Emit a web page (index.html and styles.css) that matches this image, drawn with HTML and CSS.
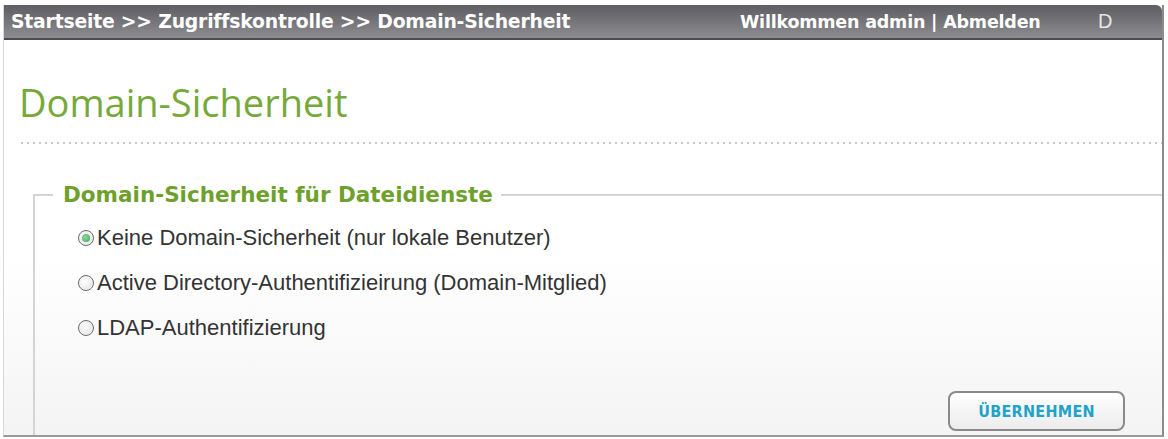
FILE: index.html
```html
<!DOCTYPE html>
<html lang="de">
<head>
    <meta charset="utf-8">
    <title>Domain-Sicherheit</title>
    <link rel="stylesheet" href="styles.css">
</head>
<body>
    <div class="frame">
        <div class="topbar">
            <div class="crumbs">Startseite &gt;&gt; Zugriffskontrolle &gt;&gt; Domain-Sicherheit</div>
            <div class="user">Willkommen admin | Abmelden</div>
            <div class="lang">D</div>
        </div>
        <div class="content">
            <h1 class="title">Domain-Sicherheit</h1>
            <div class="dots"></div>
            <fieldset class="group">
                <legend>Domain-Sicherheit für Dateidienste</legend>
                <label class="opt"><span class="radio checked"></span>Keine Domain-Sicherheit (nur lokale Benutzer)</label>
                <label class="opt"><span class="radio"></span>Active Directory-Authentifizieirung (Domain-Mitglied)</label>
                <label class="opt"><span class="radio"></span>LDAP-Authentifizierung</label>
                <div class="actions">
                    <button class="apply">ÜBERNEHMEN</button>
                </div>
            </fieldset>
        </div>
    </div>
</body>
</html>
```

FILE: styles.css
```css
html, body {
    margin: 0;
    padding: 0;
    background: #fff;
    overflow: hidden;
}

.frame {
    margin: 5px 4px 0 3px;
    height: 432px;
    border-right: 2px solid #8c8c8c;
    border-bottom: 2px solid #9a9a9a;
    border-left: 1px solid #d8d8d8;
    display: flex;
    flex-direction: column;
    box-sizing: border-box;
}

.topbar {
    height: 35px;
    display: flex;
    align-items: center;
    background: linear-gradient(#5e5e62, #727277 45%, #8c8c91);
    border-bottom: 2px solid #4c4c50;
    border-top-right-radius: 6px;
    color: #fff;
    font-family: "DejaVu Sans", sans-serif;
    font-weight: 700;
    font-size: 17.5px;
    white-space: nowrap;
    box-sizing: border-box;
}

.crumbs {
    padding-left: 7px;
    width: 729px;
    font-size: 18.8px;
    letter-spacing: -0.2px;
}

.user {
    width: 358px;
    letter-spacing: -0.2px;
}

.lang {
    font-family: "Liberation Sans", sans-serif;
    font-weight: 400;
    color: #e6e6e6;
    font-size: 20px;
}

.content {
    flex: 1;
    padding: 0 0 0 15px;
    background: linear-gradient(#fff 55%, #f4f4f4);
    display: flex;
    flex-direction: column;
}

.title {
    margin: 40px 0 0 0;
    font-family: "Open Sans", sans-serif;
    font-weight: 400;
    font-size: 38px;
    line-height: 44px;
    color: #76a83a;
}

.dots {
    margin-top: 18px;
    height: 2px;
    background-image: radial-gradient(circle, #c8c8c8 0.8px, transparent 1.2px);
    background-size: 6px 2px;
}

.group {
    margin: 38px 0 0 14px;
    padding: 8px 0 0 43px;
    flex: 1;
    border: 0;
    border-top: 2px solid #d4d4d4;
    border-left: 2px solid #d4d4d4;
    display: flex;
    flex-direction: column;
    min-width: 0;
}

.group legend {
    margin-left: -25px;
    padding: 0 8px 0 10px;
    font-family: "DejaVu Sans", sans-serif;
    font-weight: 700;
    font-size: 21.5px;
    color: #6ea12c;
}

.opt {
    display: flex;
    align-items: center;
    height: 45px;
    font-family: "Liberation Sans", Arial, sans-serif;
    font-size: 22px;
    color: #333;
}

.radio {
    width: 14px;
    height: 14px;
    margin-right: 3px;
    border: 1px solid #6a6a6a;
    border-radius: 50%;
    background: radial-gradient(circle at 40% 40%, #fff, #dcdcdc);
    box-shadow: inset 0 0 0 1px #f4f4f4;
    position: relative;
}

.radio.checked::after {
    content: "";
    position: absolute;
    left: 3px;
    top: 3px;
    width: 8px;
    height: 8px;
    border-radius: 50%;
    background: radial-gradient(circle at 40% 40%, #8fdc9c, #3aa35a);
}

.actions {
    flex: 1;
    display: flex;
    justify-content: flex-end;
    align-items: flex-end;
    padding: 0 37px 4px 0;
}

.apply {
    width: 177px;
    height: 40px;
    border: 2px solid #8a8a8a;
    border-radius: 8px;
    background: linear-gradient(#ffffff, #ececec);
    color: #23a3c6;
    font-family: "DejaVu Sans Condensed", "DejaVu Sans", sans-serif;
    font-weight: 700;
    font-size: 16px;
    letter-spacing: 0.3px;
    padding: 0;
}
```
